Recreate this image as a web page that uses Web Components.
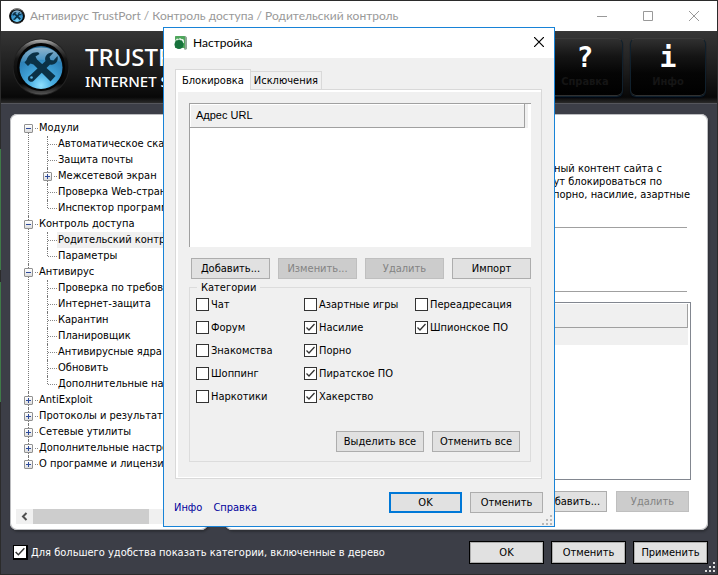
<!DOCTYPE html>
<html lang="ru">
<head>
<meta charset="utf-8">
<title>Антивирус TrustPort</title>
<style>
html, body { margin: 0; height: 100%; }
body {
  font: 11px/13px "DejaVu Sans Condensed", "DejaVu Sans", sans-serif;
  color: #000;
  background: #2b2b2b;
}
desk-stage { min-height: 100vh; }
</style>
</head>
<body>
<desk-stage>
  <main-window>
    <tree-view slot="nav"></tree-view>
    <access-page slot="page"></access-page>
  </main-window>
  <settings-dialog slot="over"></settings-dialog>
</desk-stage>

<script>
const define = (name, html, setup) => {
  const tpl = document.createElement('template');
  tpl.innerHTML = html;
  customElements.define(name, class extends HTMLElement {
    constructor() {
      super();
      this.attachShadow({ mode: 'open' }).append(tpl.content.cloneNode(true));
    }
    connectedCallback() { if (setup) setup(this, this.shadowRoot); }
  });
};

/* Brand badge: glossy ring, blue disc, crossed hammer and wrench */
define('brand-badge', `
<style>
:host { display: block; width: var(--badge, 58px); height: var(--badge, 58px); flex: none; }
svg { display: block; width: 100%; height: 100%; }
</style>
<svg viewBox="0 0 58 58" aria-hidden="true">
  <defs>
    <linearGradient id="ring" x1="0" y1="0" x2="0" y2="1">
      <stop offset="0" stop-color="#b4b4b4"/><stop offset=".14" stop-color="#4a4a4a"/>
      <stop offset=".35" stop-color="#161616"/><stop offset=".8" stop-color="#050505"/>
      <stop offset="1" stop-color="#555"/>
    </linearGradient>
    <radialGradient id="disc" cx=".5" cy=".92" r=".9">
      <stop offset="0" stop-color="#8fe0ff"/><stop offset=".3" stop-color="#49aee2"/>
      <stop offset=".7" stop-color="#2f86bd"/><stop offset="1" stop-color="#2b6f9c"/>
    </radialGradient>
    <linearGradient id="gloss" x1="0" y1="0" x2="0" y2="1">
      <stop offset="0" stop-color="#fff" stop-opacity=".8"/><stop offset="1" stop-color="#fff" stop-opacity=".12"/>
    </linearGradient>
  </defs>
  <circle cx="29" cy="29" r="28.500" fill="#222"/>
  <circle cx="29" cy="29" r="27.500" fill="url(#ring)"/>
  <circle cx="29" cy="29" r="24" fill="#040404"/>
  <circle cx="29" cy="29.500" r="21.500" fill="url(#disc)"/>
  <path d="M9 24C11 14 19 9.500 29 9.500S47 14 49 24c-10-3-30-3-40 0z" fill="url(#gloss)" opacity=".6"/>
  <g fill="#0b3146">
    <path d="M12.500 24.500l2-2.500c2-5 6-8.500 12-7.500l1 1.500-4 2.500 1.500 3L43.500 38l-5 5.500-17-17-3-1-2.500 2.500z"/>
    <path d="M33.500 23c-1.500-4.500 2-9 8-8.500l-4 4.500 1 3 3 .500 4-4.500c1.500 6-3 9.500-7.500 8.500L22 42.500c-2 2.500-7 1-6-3 .500-1.500 1.500-2 2.500-2.500z"/>
  </g>
  <circle cx="19.500" cy="39.500" r="1.300" fill="#57b4e4"/>
</svg>`);

/* Push button; kind = plain | ring | default */
define('push-button', `
<style>
:host { display: block; height: 21px; }
button {
  box-sizing: border-box; width: 100%; height: 100%; padding: 0; margin: 0;
  font: inherit; color: #000; background: #e1e1e1; border: 1px solid #adadad; border-radius: 0;
}
button:disabled { color: #838383; background: #ccc; border-color: #bfbfbf; }
:host([kind=default]) button { border: 2px solid #0078d7; }
:host([kind=ring]) { height: 23px; }
:host([kind=ring]) button { border: 1px solid #000; box-shadow: inset 0 0 0 1px #adadad; }
</style>
<button type="button"><slot></slot></button>`,
(el, root) => { root.querySelector('button').disabled = el.hasAttribute('disabled'); });

/* Check box with its label */
define('check-box', `
<style>
:host { display: block; }
label { display: flex; align-items: center; gap: 2px; height: 13px; white-space: nowrap; }
input {
  appearance: none; box-sizing: border-box; width: 13px; height: 13px; margin: 0; flex: none;
  background: #fff; border: 1px solid #333;
}
input:checked {
  background: #fff url('data:image/svg+xml,<svg xmlns="http://www.w3.org/2000/svg" viewBox="0 0 11 11"><path d="M1.5 5.5L4 8l5.5-6" fill="none" stroke="%23333" stroke-width="1.3"/></svg>');
}
:host([dark]) label { gap: 3px; height: 15px; }
:host([dark]) input { width: 15px; height: 15px; border: 2px solid #000; border-left-width: 1px; border-top-width: 1px; }
</style>
<label><input type="checkbox"><span><slot></slot></span></label>`,
(el, root) => { root.querySelector('input').checked = el.hasAttribute('checked'); });

/* Window resize grip */
define('size-grip', `
<style>
:host { display: block; color: #b8b8b8; }
svg { display: block; }
</style>
<svg width="11" height="11" fill="currentColor" aria-hidden="true">
  <path d="M8 0h2v2h-2zM4 4h2v2H4zM8 4h2v2H8zM0 8h2v2H0zM4 8h2v2H4zM8 8h2v2H8z"/>
</svg>`);

/* Navigation tree */
const TREE = [
  ['Модули', '-', ['Автоматическое сканирование', 'Защита почты', '+Межсетевой экран', 'Проверка Web-страниц', 'Инспектор программ']],
  ['Контроль доступа', '-', ['*Родительский контроль', 'Параметры']],
  ['Антивирус', '-', ['Проверка по требованию', 'Интернет-защита', 'Карантин', 'Планировщик', 'Антивирусные ядра', 'Обновить', 'Дополнительные настройки']],
  ['AntiExploit', '+'],
  ['Протоколы и результаты', '+'],
  ['Сетевые утилиты', '+'],
  ['Дополнительные настройки', '+'],
  ['О программе и лицензии', '+']
];
define('tree-view', `
<style>
:host { display: flex; flex-direction: column; flex: 1; min-width: 0; padding: 6px 0 6px 6px; }
ul { list-style: none; margin: 0; padding: 0; }
.root { flex: 1; padding-left: 8px; overflow: hidden; }
li { position: relative; }
li ul { padding-left: 19px; }
.row { display: flex; align-items: center; height: 16px; white-space: nowrap; }
.row span { padding: 0 2px 0 1px; line-height: 16px; }
.sel span { background: #f0f0f0; flex: 1; }
li::before {
  content: ""; position: absolute; left: 4px; top: 0; bottom: 0;
  border-left: 1px dotted #777;
}
li:last-child::before { bottom: auto; height: 8px; }
.root > li:first-child::before { top: 8px; }
i { flex: none; box-sizing: border-box; width: 14px; height: 1px; padding-left: 4px; background: repeating-linear-gradient(90deg, transparent 0 1px, #888 1px 2px); background-clip: content-box; }
button {
  position: relative; flex: none; box-sizing: border-box; width: 9px; height: 9px; margin: 0 1px 0 0; padding: 0;
  border: 1px solid #919191; border-radius: 1px; background: linear-gradient(#fff, #ddd);
}
button::before, button.plus::after { content: ""; position: absolute; left: 1px; top: 3px; width: 5px; height: 1px; background: #2e4b9b; }
button.plus::after { left: 3px; top: 1px; width: 1px; height: 5px; }
button + i { width: 4px; padding-left: 0; }
.bar { display: flex; height: 15px; background: #f0f0f0; }
.bar svg { flex: none; width: 17px; }
.bar div { width: 116px; background: #cdcdcd; }
</style>
<ul class="root" role="tree"></ul>
<div class="bar"><svg viewBox="0 0 17 15" aria-hidden="true"><path d="M10.500 4L7 7.500l3.500 3.500" fill="none" stroke="#505050" stroke-width="2"/></svg><div></div></div>`,
(el, root) => {
  const row = (text, mark, sel) =>
    `<div class="row${sel ? ' sel' : ''}">${mark ? `<button type="button" class="${mark === '+' ? 'plus' : 'minus'}" aria-label="${text}"></button>` : ''}<i></i><span>${text}</span></div>`;
  root.querySelector('.root').innerHTML = TREE.map(([t, m, kids]) =>
    `<li role="treeitem">${row(t, m)}${kids ? '<ul role="group">' + kids.map(k => {
      const plus = k[0] === '+', sel = k[0] === '*';
      return `<li role="treeitem">${row(k.replace(/^[+*]/, ''), plus ? '+' : '', sel)}</li>`;
    }).join('') + '</ul>' : ''}</li>`).join('');
});

/* Right-hand page */
define('access-page', `
<style>
:host { display: flex; flex-direction: column; flex: 1; min-width: 0; box-sizing: border-box; padding: 48px 17px 18px 16px; }
p { margin: 0; text-align: right; white-space: nowrap; padding-right: 1px; }
p span { display: block; }
p .short { padding-right: 28px; }
hr { margin: 26px 4px 0 0; border: 0; border-top: 1px solid #a0a0a0; }
hr + hr { margin-top: 63px; }
.list { flex: 1; margin-top: 10px; border: 1px solid #828790; padding: 1px 2px 1px 1px; }
table { width: 100%; border-collapse: separate; border-spacing: 0; }
th { height: 24px; box-sizing: border-box; padding: 0; background: #f0f0f0; border-right: 1px solid #a0a0a0; border-bottom: 1px solid #a0a0a0; }
td { height: 17px; padding: 0; background: #f0f0f0; }
.acts { display: flex; justify-content: flex-end; gap: 9px; margin: 11px 2px 0 0; }
push-button { width: 73px; }
</style>
<p><span class="short">Анализируется визуальный контент сайта с</span><span class="short">сайты будут блокироваться по</span><span>категориям: порно, насилие, азартные</span></p>
<hr><hr>
<div class="list"><table><thead><tr><th></th></tr></thead><tbody><tr><td></td></tr></tbody></table></div>
<div class="acts"><push-button>Добавить...</push-button><push-button disabled>Удалить</push-button></div>`);

/* Large header button */
define('header-button', `
<style>
:host { display: block; width: 76px; }
button {
  display: flex; flex-direction: column; align-items: center; width: 100%; height: 59px; box-sizing: border-box; padding: 2px 0 0;
  font: inherit; color: #151515; border: 1px solid #10202c; border-top-color: #3a3a3a; border-radius: 6px;
  background: linear-gradient(#303030, #151515 30%, #050505 60%, #000);
  box-shadow: inset 0 -1px 0 #303030, 0 1px 1px #000814;
}
b { font: bold 28px/34px "DejaVu Sans Mono", monospace; color: #fff; }
small { font: bold 11px/13px "DejaVu Sans Condensed", sans-serif; }
</style>
<button type="button"><b><slot name="glyph"></slot></b><small><slot></slot></small></button>`);

/* Application window */
define('main-window', `
<style>
:host { display: flex; flex-direction: column; flex: 1; position: relative; box-sizing: border-box; min-width: 0;
  border: 1px solid #2b2b2b; background: #3c3e47; }
.title { display: flex; align-items: center; height: 30px; padding: 0 0 0 8px; background: #fff; }
.title h1 { flex: 1; margin: 0 0 0 5px; font: 12px/16px Lato, "Noto Sans", sans-serif; color: #999; white-space: nowrap; }
brand-badge.small { --badge: 16px; }
.title button { width: 46px; height: 29px; padding: 0; border: 0; background: none; }
.title svg { display: block; margin: auto; fill: none; stroke: #999; }
.head { display: flex; align-items: center; height: 73px; padding: 0 11px; box-sizing: border-box;
  background: linear-gradient(#363636, #1c1c1c 55%, #080808 92%, #2a2a2a); border-bottom: 1px solid #55565c; }
.brand { flex: 1; margin-left: 15px; color: #fff; font-family: "Noto Sans", sans-serif; white-space: nowrap; }
.brand strong { display: block; font-size: 24px; line-height: 28px; font-weight: 500; }
.brand span { display: block; font-size: 15px; line-height: 20px; font-weight: 500; }
.tools { display: flex; gap: 7px; }
.main { flex: 1; display: flex; gap: 17px; padding: 10px 9px 0; }
.panel { display: flex; background: #fff; border-radius: 7px; box-shadow: inset 0 0 0 1px #bcbdc0, 1px 2px 2px #2d2f35; }
.nav { flex: 0 0 198px; min-width: 0; overflow: hidden; }
.page { flex: 1; min-width: 0; overflow: hidden; }
.foot { display: flex; align-items: center; gap: 7px; height: 44px; padding: 0 9px 0 12px; color: #fff; }
.foot check-box { flex: 1; }
.foot push-button { width: 75px; color: #000; }
size-grip { position: absolute; right: 1px; bottom: 1px; color: #ddd; }
</style>
<header class="title">
  <brand-badge class="small"></brand-badge>
  <h1>Антивирус TrustPort / Контроль доступа / Родительский контроль</h1>
  <button type="button" aria-label="Свернуть"><svg width="10" height="10"><path d="M0 5.500h10"/></svg></button>
  <button type="button" aria-label="Развернуть"><svg width="10" height="10"><path d="M.5.500h9v9h-9z"/></svg></button>
  <button type="button" aria-label="Закрыть"><svg width="10" height="10"><path d="M0 0l10 10M10 0L0 10"/></svg></button>
</header>
<div class="head">
  <brand-badge></brand-badge>
  <div class="brand"><strong>TRUSTPORT</strong><span>INTERNET SECURITY</span></div>
  <div class="tools">
    <header-button><span slot="glyph">?</span>Справка</header-button>
    <header-button><span slot="glyph">i</span>Инфо</header-button>
  </div>
</div>
<div class="main">
  <nav class="panel nav"><slot name="nav"></slot></nav>
  <section class="panel page"><slot name="page"></slot></section>
</div>
<footer class="foot">
  <check-box dark checked>Для большего удобства показать категории, включенные в дерево</check-box>
  <push-button kind="ring">OK</push-button>
  <push-button kind="ring">Отменить</push-button>
  <push-button kind="ring">Применить</push-button>
</footer>
<size-grip></size-grip>`);

/* Tab strip with one shown pane */
define('tab-pane', `
<style>
:host { display: flex; flex-direction: column; flex: 1; }
.tabs { display: flex; align-items: flex-end; }
button { box-sizing: border-box; height: 18px; margin: 0; padding: 0 3px; font: inherit; color: #000; border: 1px solid #d9d9d9; border-bottom: 0; background: #f0f0f0; }
button[aria-selected=true] { position: relative; height: 21px; margin-bottom: -1px; padding: 0 6px; background: #fff; }
button + button { border-left: 0; }
.pane { flex: 1; display: flex; flex-direction: column; box-sizing: border-box; border: 1px solid #d9d9d9; box-shadow: inset 2px 2px 0 #fff, inset 0 -1px 0 #fff; padding: 13px 10px 16px 13px; }
</style>
<div class="tabs" role="tablist"><button type="button" role="tab" aria-selected="true">Блокировка</button><button type="button" role="tab">Исключения</button></div>
<div class="pane" role="tabpanel"><slot></slot></div>`);

/* Group of blocking categories */
const CATS = ['Чат', 'Азартные игры', 'Переадресация', 'Форум', '*Насилие', '*Шпионское ПО', 'Знакомства', '*Порно', '', 'Шоппинг', '*Пиратское ПО', '', 'Наркотики', '*Хакерство'];
define('category-group', `
<style>
:host { display: block; margin-top: 2px; }
fieldset { margin: 0; padding: 4px 10px 9px 6px; border: 1px solid #dcdcdc; min-width: 0; }
legend { margin-left: 1px; padding: 0 4px; }
.grid { display: grid; grid-template-columns: 108px 111px 1fr; row-gap: 10px; }
.acts { display: flex; justify-content: flex-end; gap: 8px; margin-top: 28px; }
.acts push-button { width: 88px; }
</style>
<fieldset><legend>Категории</legend><div class="grid"></div>
<div class="acts"><push-button>Выделить все</push-button><push-button>Отменить все</push-button></div></fieldset>`,
(el, root) => {
  root.querySelector('.grid').innerHTML = CATS.map(c => !c ? '<span></span>' :
    `<check-box${c[0] === '*' ? ' checked' : ''}>${c.replace('*', '')}</check-box>`).join('');
});

/* Settings dialog floating over the window */
define('settings-dialog', `
<style>
:host { display: flex; flex-direction: column; box-sizing: border-box; width: 392px; min-height: 498px; border: 1px solid #1883d7; background: #f0f0f0; }
header { display: flex; align-items: center; height: 30px; padding: 0 1px 0 9px; background: #fff; }
header svg { flex: none; display: block; }
h2 { flex: 1; margin: 0 0 0 4px; font: 12px/16px Lato, "Noto Sans", sans-serif; }
header button { width: 28px; height: 30px; padding: 0 0 2px; border: 0; background: none; }
header button svg { margin: auto; }
.body { flex: 1; display: flex; flex-direction: column; padding: 11px 12px 0 11px; }
.list { height: 144px; box-sizing: border-box; background: #fff; border-left: 1px solid #a0a0a0; border-top: 1px solid #a0a0a0; padding-right: 6px; }
table { width: 100%; border-collapse: separate; border-spacing: 0; }
th { height: 24px; box-sizing: border-box; padding: 0 6px; text-align: left; font: 11px/13px "Liberation Sans", sans-serif; background: #f0f0f0; border-right: 1px solid #a0a0a0; border-bottom: 1px solid #a0a0a0; box-shadow: inset 1px 1px 0 #fff, 3px 0 0 #f0f0f0; }
.acts { display: grid; grid-template-columns: repeat(4, 79px); gap: 8px; margin: 11px 0 0 2px; }
footer { display: flex; align-items: center; gap: 8px; padding: 12px 11px 12px 10px; }
footer a { color: #00009c; text-decoration: none; margin-right: 3px; padding-top: 10px; }
footer .gap { flex: 1; }
footer push-button { width: 73px; }
size-grip { position: absolute; right: 1px; bottom: 0; }
</style>
<header>
  <svg width="16" height="16" viewBox="0 0 16 16" aria-hidden="true">
    <path d="M3 1h9.500L14 2.500V14l-2 1-1-1V5H2V2z" fill="#8fa796"/>
    <path d="M3 1h8q1 0 1 1v11H2V2q0-1 1-1z" fill="#4fa65c"/>
    <path d="M2.500 5l1.500-1.500L5.500 4 7 3l1.500 1L10 4l1 1.500V8H2z" fill="#e2f1e4"/>
    <circle cx="6" cy="9.500" r="4.500" fill="#17723c"/>
    <path d="M6 4.500v3M3.500 5.500l1 2M8.500 5.500l-1 2" stroke="#17723c"/>
  </svg>
  <h2>Настройка</h2>
  <button type="button" aria-label="Закрыть"><svg width="10" height="10"><path d="M0 0l10 10M10 0L0 10" fill="none" stroke="#000" stroke-width="1.200"/></svg></button>
</header>
<div class="body">
  <tab-pane>
    <div class="list"><table><thead><tr><th>Адрес URL</th></tr></thead></table></div>
    <div class="acts"><push-button>Добавить...</push-button><push-button disabled>Изменить...</push-button><push-button disabled>Удалить</push-button><push-button>Импорт</push-button></div>
    <category-group></category-group>
  </tab-pane>
</div>
<footer><a href="#info">Инфо</a><a href="#help">Справка</a><span class="gap"></span><push-button kind="default">OK</push-button><push-button>Отменить</push-button></footer>
<size-grip></size-grip>`);

/* Desktop surface: window below, dialog centred over it */
define('desk-stage', `
<style>
:host { display: flex; position: relative; }
:host::before { content: ""; position: absolute; z-index: 1; left: 0; top: 0; bottom: 0; width: 1px;
  background: linear-gradient(#2b2b2b 26%, #3f7a48 26% 47%, #2b2b2b 47% 49%, #3f7a48 49% 70%, #2b2b2b 70%); }
::slotted([slot=over]) { position: absolute; top: 27px; left: 0; right: 0; margin: 0 auto; }
</style>
<slot></slot><slot name="over"></slot>`);
</script>
</body>
</html>
